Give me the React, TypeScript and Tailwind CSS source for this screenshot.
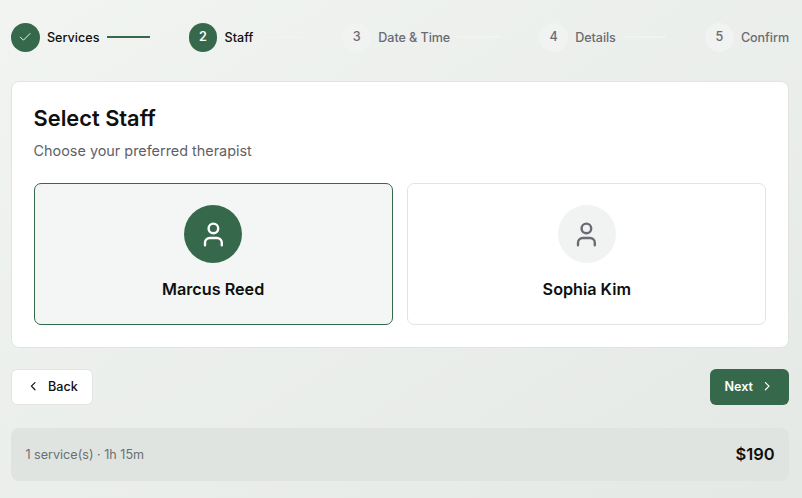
import { Check, ChevronLeft, ChevronRight, User } from 'lucide-react'

const STEPS = [
  { label: 'Services', state: 'done' },
  { label: 'Staff', state: 'active' },
  { label: 'Date & Time', state: 'todo' },
  { label: 'Details', state: 'todo' },
  { label: 'Confirm', state: 'todo' },
]

const STAFF = [
  { name: 'Marcus Reed', selected: true },
  { name: 'Sophia Kim', selected: false },
]

export default function App() {
  return (
    <div className="h-[498px] w-[802px] overflow-hidden bg-gradient-to-br from-[#f1f4f1] to-[#e5e9e6] pt-[23px] pr-[13px] pl-[11px] font-['Inter',sans-serif] text-[#0f0f10]">
      {/* Stepper */}
      <div className="flex items-center justify-between">
        {STEPS.map((step, i) => {
          const on = step.state !== 'todo'
          return (
            <div key={step.label} className="flex items-center gap-[7.2px]">
              <div
                className={`flex h-[28.8px] w-[28.8px] items-center justify-center rounded-full text-[12.6px] ${
                  on ? 'bg-[#36694c] font-semibold text-white' : 'bg-[#f1f2f2] font-medium text-[#6b6b73]'
                }`}
              >
                {step.state === 'done' ? <Check className="h-[14.4px] w-[14.4px]" strokeWidth={1.5} /> : i + 1}
              </div>
              <span
                className={`pt-[2px] text-[12.6px] font-medium ${
                  on ? 'text-[#0f0f10]' : 'tracking-[-0.08px] text-[#6b6b73]'
                }`}
              >
                {step.label}
              </span>
              {i < STEPS.length - 1 && (
                <div className={`h-[2px] w-[43.2px] ${step.state === 'done' ? 'bg-[#36694c]' : 'bg-[#f1f2f2]'}`} />
              )}
            </div>
          )
        })}
      </div>

      {/* Card */}
      <div className="mt-[29px] rounded-[8px] border border-[#e2e4e3] bg-white p-[21.6px]">
        <h1 className="pt-[1px] text-[21.8px] leading-[28.8px] font-semibold">Select Staff</h1>
        <p className="mt-[7.2px] text-[14.4px] leading-[21.6px] text-[#5f5f68]">Choose your preferred therapist</p>
        <div className="mt-[20.6px] grid grid-cols-2 gap-[14.4px]">
          {STAFF.map((s) => (
            <div
              key={s.name}
              className={`flex flex-col items-center gap-[14.4px] rounded-[7px] border p-[21.6px] ${
                s.selected ? 'border-[#36694c] bg-[#f4f6f5]' : 'border-[#e2e4e3] bg-white'
              }`}
            >
              <div
                className={`flex h-[57.6px] w-[57.6px] items-center justify-center rounded-full ${
                  s.selected ? 'bg-[#36694c] text-white' : 'bg-[#f1f2f2] text-[#6b6b73]'
                }`}
              >
                <User className="h-[28.8px] w-[28.8px]" strokeWidth={2} />
              </div>
              <span className="text-[16.2px] leading-[25.2px] font-semibold">{s.name}</span>
            </div>
          ))}
        </div>
      </div>

      {/* Actions */}
      <div className="mt-[21px] flex items-center justify-between">
        <button className="flex h-[36px] items-center gap-[7.2px] rounded-[6px] border border-[#e2e4e3] bg-white px-[14.4px] text-[12.6px] font-medium">
          <ChevronLeft className="h-[14.4px] w-[14.4px]" />
          <span className="pt-[1px]">Back</span>
        </button>
        <button className="flex h-[36px] items-center gap-[7.2px] rounded-[6px] bg-[#36694c] px-[14.4px] text-[12.6px] font-semibold text-white">
          <span className="pt-[1px]">Next</span>
          <ChevronRight className="h-[14.4px] w-[14.4px]" />
        </button>
      </div>

      {/* Summary */}
      <div className="mt-[23px] flex h-[53px] items-center justify-between rounded-[8px] bg-[#dfe4e1] px-[14.4px]">
        <span className="pt-[2px] text-[12.6px] text-[#6b6f72]">1 service(s) · 1h 15m</span>
        <span className="text-[16.5px] font-semibold">$190</span>
      </div>
    </div>
  )
}
